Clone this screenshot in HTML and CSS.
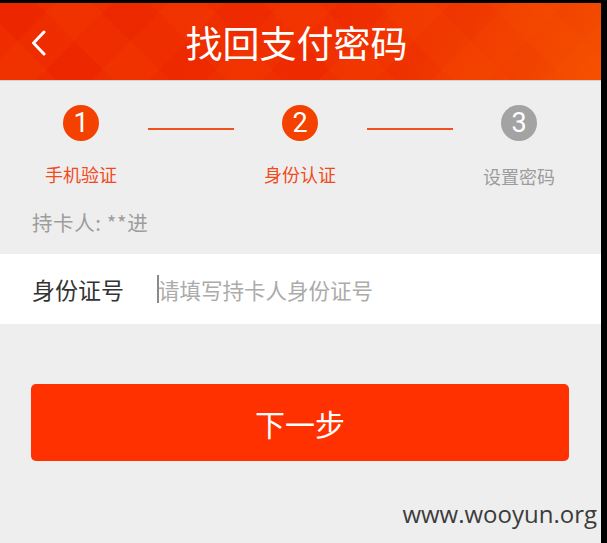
FILE: index.html
```html
<!DOCTYPE html>
<html lang="zh-CN">
<head>
<meta charset="utf-8">
<title>找回支付密码</title>
<link rel="stylesheet" href="styles.css">
</head>
<body>
<div class="screen">
  <header class="topbar">
    <span class="back">
      <svg width="16" height="26" viewBox="0 0 16 26"><polyline points="13,2 2.5,13 13,24" fill="none" stroke="#fff" stroke-width="3" stroke-linecap="round" stroke-linejoin="round"/></svg>
    </span>
    <h1 class="title">找回支付密码</h1>
    <span></span>
  </header>

  <div class="steps">
    <div class="step done">
      <div class="num">1</div>
      <div class="label">手机验证</div>
    </div>
    <div class="link"></div>
    <div class="step done">
      <div class="num">2</div>
      <div class="label">身份认证</div>
    </div>
    <div class="link"></div>
    <div class="step todo">
      <div class="num">3</div>
      <div class="label">设置密码</div>
    </div>
  </div>

  <p class="holder">持卡人: **进</p>

  <div class="field">
    <span class="field-label">身份证号</span>
    <span class="cursor"></span>
    <span class="placeholder">请填写持卡人身份证号</span>
  </div>

  <button class="next">下一步</button>

  <div class="mark">www.wooyun.org</div>
</div>
</body>
</html>
```
FILE: styles.css
```css
html, body {
  margin: 0;
  padding: 0;
  background: #000;
}
body {
  font-family: "Noto Sans CJK SC", "Noto Sans", sans-serif;
}
.screen {
  width: 601px;
  height: 540px;
  margin-top: 3px;
  background: #eeeeee;
  display: flex;
  flex-direction: column;
}
.topbar {
  height: 77px;
  flex-shrink: 0;
  border-bottom: 1px solid #d2d2d2;
  display: grid;
  grid-template-columns: 1fr auto 1fr;
  align-items: center;
  padding-right: 8px;
  background:
    linear-gradient(135deg, rgba(255,120,0,0) 0%, rgba(255,120,0,0) 70%, rgba(255,110,0,0.25) 100%),
    repeating-linear-gradient(45deg, rgba(255,90,0,0.10) 0 40px, rgba(255,90,0,0) 40px 80px),
    repeating-linear-gradient(-45deg, rgba(255,90,0,0.10) 0 40px, rgba(255,90,0,0) 40px 80px),
    linear-gradient(90deg, #ec2700 0%, #ee2b00 55%, #f04200 100%);
}
.back {
  padding-left: 31px;
  display: flex;
  align-items: center;
  padding-top: 2px;
}
.title {
  margin: 0;
  color: #fff;
  font-size: 37px;
  font-weight: 400;
  line-height: 40px;
}
.steps {
  display: flex;
  align-items: flex-start;
  padding: 24px 27px 0 26px;
}
.step {
  width: 110px;
  display: flex;
  flex-direction: column;
  align-items: center;
}
.num {
  width: 36px;
  height: 36px;
  border-radius: 50%;
  color: #fff;
  font-family: "Roboto", "Noto Sans", sans-serif;
  font-size: 27px;
  line-height: 36px;
  text-align: center;
}
.done .num { background: #f44100; }
.todo .num { background: #a3a3a3; }
.label {
  margin-top: 23px;
  font-size: 18px;
  line-height: 20px;
}
.done .label { color: #f14a1c; }
.todo .label { color: #9c9c9c; margin-top: 25px; }
.link {
  flex: 1;
  height: 2px;
  margin: 23px 11px 0 12px;
  background: #f1501e;
}
.holder {
  margin: 24px 0 0 32px;
  font-size: 20.5px;
  line-height: 24px;
  letter-spacing: 0.6px;
  color: #9d9d9d;
}
.field {
  margin-top: 20px;
  height: 70px;
  flex-shrink: 0;
  background: #fff;
  display: flex;
  align-items: center;
  padding-left: 32px;
}
.field-label {
  width: 125px;
  font-size: 23px;
  color: #333;
}
.cursor {
  width: 2px;
  height: 28px;
  background: #8a8a8a;
}
.placeholder {
  margin-left: -1px;
  font-size: 21.5px;
  color: #ababab;
}
.next {
  margin: 60px 32px 0 31px;
  height: 77px;
  flex-shrink: 0;
  border: none;
  border-radius: 5px;
  background: #ff3100;
  color: #fff;
  font-family: "Noto Sans CJK SC", sans-serif;
  font-size: 30px;
  padding: 0;
}
.mark {
  margin-top: 37px;
  text-align: right;
  padding-right: 4px;
  font-family: "Open Sans", "Noto Sans", sans-serif;
  font-size: 24px;
  line-height: 32px;
  color: #3c3c3c;
}
```
